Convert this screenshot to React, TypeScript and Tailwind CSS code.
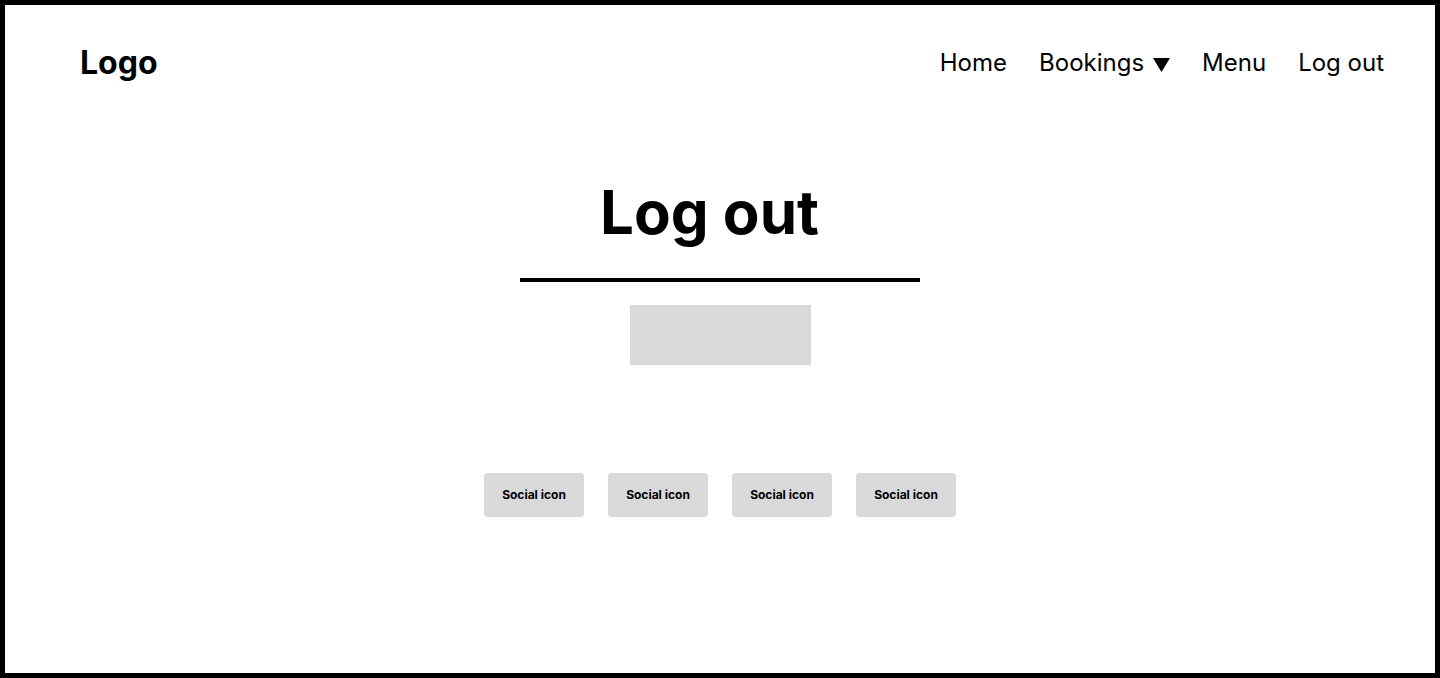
import React from "react";

export default function App() {
  const font = { fontFamily: "Inter, 'Noto Sans', sans-serif" };
  return (
    <div
      className="h-[678px] w-full border-[5px] border-black bg-white text-black flex flex-col"
      style={font}
    >
      <header className="h-[115px] flex items-center justify-between pl-[75px] pr-[51px]">
        <div className="text-[32px] font-bold leading-none">Logo</div>
        <nav className="flex items-center gap-[32px] text-[24px] leading-none">
          <span>Home</span>
          <span className="flex items-center">
            Bookings
            <svg width="17" height="14" viewBox="0 0 17 14" className="ml-[9px] mt-[4px]">
              <polygon points="0,0 17,0 8.5,14" fill="black" />
            </svg>
          </span>
          <span>Menu</span>
          <span>Log out</span>
        </nav>
      </header>
      <main className="flex flex-col items-center">
        <h1 className="mt-[56px] text-[60px] font-bold leading-[72px] -ml-[21px]">Log out</h1>
        <div className="mt-[30px] h-[4px] w-[400px] bg-black" />
        <div className="mt-[23px] h-[60px] w-[181px] bg-[#d9d9d9]" />
        <div className="mt-[108px] flex gap-[24px]">
          {[0, 1, 2, 3].map((i) => (
            <div
              key={i}
              className="h-[44px] w-[100px] rounded-[4px] bg-[#d9d9d9] flex items-center justify-center text-[12px] font-bold"
            >
              Social icon
            </div>
          ))}
        </div>
      </main>
    </div>
  );
}
